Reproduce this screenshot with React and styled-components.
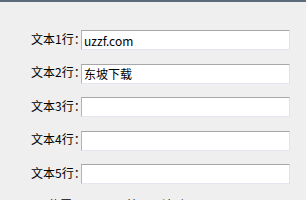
import React, { useState } from 'react';
import styled, { createGlobalStyle } from 'styled-components';

const GlobalStyle = createGlobalStyle`
  html, body {
    margin: 0;
    padding: 0;
    background: #efefef;
    overflow: hidden;
  }
  body {
    font-family: "Noto Sans CJK SC", "Liberation Sans", sans-serif;
    font-size: 12px;
    color: #000;
  }
`;

const Panel = styled.div`
  width: 306px;
  height: 200px;
  box-sizing: border-box;
  border-top: 2px solid #5c6b7a;
  background: #efefef;
  padding-top: 28px;
  overflow: hidden;
`;

const Form = styled.div`
  display: flex;
  flex-direction: column;
  gap: 13.5px;
`;

const Row = styled.div`
  display: flex;
  align-items: center;
  height: 20px;
`;

const Label = styled.span`
  width: 50px;
  padding-left: 31px;
  white-space: nowrap;
  line-height: 12px;
  margin-top: -3px;
`;

const Field = styled.input`
  width: 209px;
  height: 20px;
  box-sizing: border-box;
  margin: 0;
  padding: 0 2px;
  border-style: solid;
  border-width: 1px;
  border-color: #a7a7a9 #dfe2e8 #e3e6ec #b4b4b8;
  background: #fff;
  font-family: "Noto Sans CJK SC", "Liberation Sans", sans-serif;
  font-size: 12px;
  color: #000;
  outline: none;
`;

const Footer = styled.div`
  display: flex;
  gap: 30px;
  padding-left: 24px;
  margin-top: 15px;
  line-height: 12px;
  white-space: nowrap;
`;

const rows = [
  { label: '文本1行：', value: 'uzzf.com' },
  { label: '文本2行：', value: '东坡下载' },
  { label: '文本3行：', value: '' },
  { label: '文本4行：', value: '' },
  { label: '文本5行：', value: '' },
];

export default function App() {
  const [values, setValues] = useState(rows.map(r => r.value));

  return (
    <Panel>
      <GlobalStyle />
      <Form>
        {rows.map((r, i) => (
          <Row key={i}>
            <Label>{r.label}</Label>
            <Field
              value={values[i]}
              onChange={(e) => {
                const next = [...values];
                next[i] = e.target.value;
                setValues(next);
              }}
            />
          </Row>
        ))}
      </Form>
      <Footer>
        <span>显示位置</span>
        <span>显示效果：滚动</span>
      </Footer>
    </Panel>
  );
}
